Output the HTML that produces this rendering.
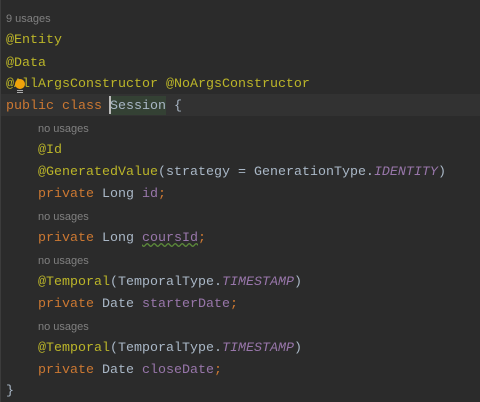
<!DOCTYPE html><html><head><style>
body{margin:0;width:480px;height:402px;background:#2b2b2b;overflow:hidden;position:relative}
.l{position:absolute;font-family:"Liberation Mono",monospace;font-size:13.33px;color:#a9b7c6;white-space:pre;line-height:16px}
.u{position:absolute;font-family:"Liberation Sans",sans-serif;font-size:11px;color:#808080;line-height:14px}
.a{color:#bbb529}.k{color:#cc7832}.f{color:#9876aa}.i{color:#9876aa;font-style:italic}
.hl{position:absolute;left:0;top:94px;width:480px;height:22px;background:#323232}
</style></head><body>
<div class="hl"></div>
<div style="position:absolute;left:110px;top:96px;width:56px;height:19px;background:#344134"></div>
<div style="position:absolute;left:109px;top:96px;width:2px;height:18px;background:#bbbbbb"></div>
<div style="position:absolute;left:0;top:0;width:1px;height:402px;background:#3c3c3c"></div>
<div class="u" style="left:6px;top:12px">9 usages</div>
<div class="l" style="left:6px;top:33px"><span class="a">@Entity</span></div>
<div class="l" style="left:6px;top:56px"><span class="a">@Data</span></div>
<div class="l" style="left:6px;top:77px"><span class="a">@AllArgsConstructor @NoArgsConstructor</span></div>
<div style="position:absolute;left:15px;top:79px;width:10px;height:10px;border-radius:50%;background:#f0a30a"></div>
<div style="position:absolute;left:17px;top:90px;width:6px;height:1px;background:#aaa;box-shadow:0 2px 0 #aaa"></div>
<div class="l" style="left:6px;top:99px"><span class="k">public class </span>Session {</div>
<div class="u" style="left:38px;top:122px">no usages</div>
<div class="l" style="left:38px;top:143px"><span class="a">@Id</span></div>
<div class="l" style="left:38px;top:165px"><span class="a">@GeneratedValue</span>(strategy = GenerationType.<span class="i">IDENTITY</span>)</div>
<div class="l" style="left:38px;top:187px"><span class="k">private </span>Long <span class="f">id</span><span class="k">;</span></div>
<div class="u" style="left:38px;top:210px">no usages</div>
<div class="l" style="left:38px;top:231px"><span class="k">private </span>Long <span class="f" style="text-decoration:underline wavy #5c8a3a">coursId</span><span class="k">;</span></div>
<div class="u" style="left:38px;top:254px">no usages</div>
<div class="l" style="left:38px;top:275px"><span class="a">@Temporal</span>(TemporalType.<span class="i">TIMESTAMP</span>)</div>
<div class="l" style="left:38px;top:297px"><span class="k">private </span>Date <span class="f">starterDate</span><span class="k">;</span></div>
<div class="u" style="left:38px;top:320px">no usages</div>
<div class="l" style="left:38px;top:341px"><span class="a">@Temporal</span>(TemporalType.<span class="i">TIMESTAMP</span>)</div>
<div class="l" style="left:38px;top:363px"><span class="k">private </span>Date <span class="f">closeDate</span><span class="k">;</span></div>
<div class="l" style="left:6px;top:384px">}</div>
</body></html>
